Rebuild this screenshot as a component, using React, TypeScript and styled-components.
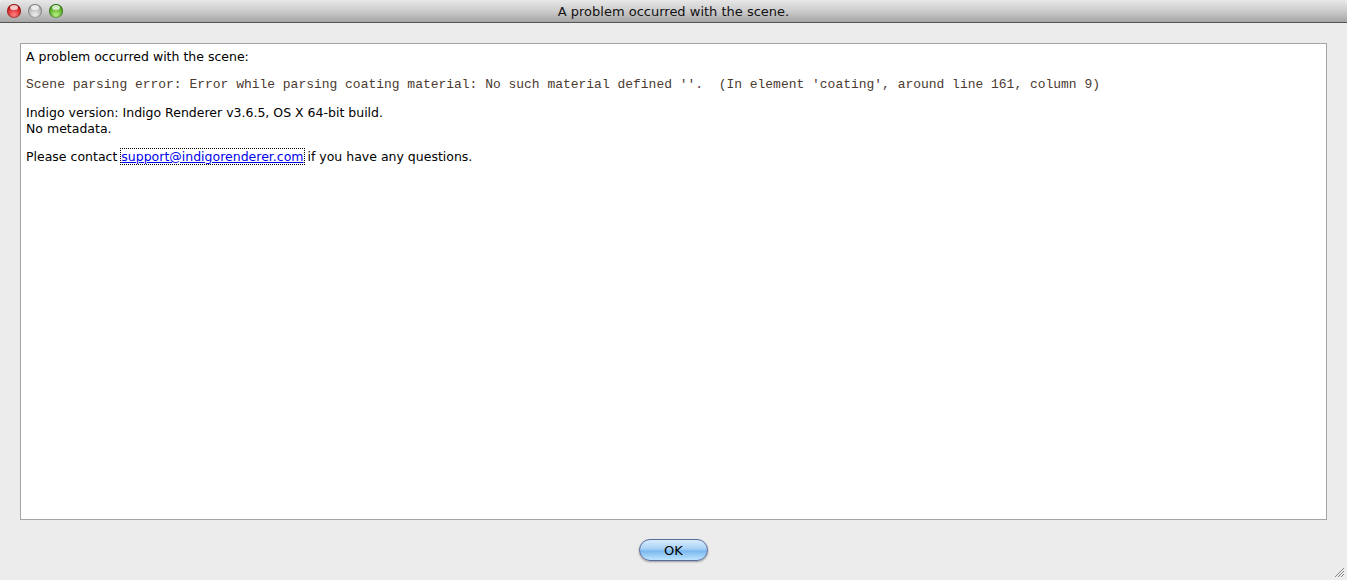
import React from "react";
import styled, { createGlobalStyle } from "styled-components";

const Global = createGlobalStyle`
  html, body { margin: 0; padding: 0; background: #ececec; }
  body { font-family: "DejaVu Sans", "Lucida Grande", sans-serif; }
`;

const Window = styled.div`
  width: 1347px;
  height: 580px;
  display: flex;
  flex-direction: column;
  background: #ececec;
  overflow: hidden;
  position: relative;
`;

const TitleBar = styled.div`
  height: 22px;
  flex: none;
  display: flex;
  align-items: center;
  position: relative;
  background: linear-gradient(#e8e8e8 0%, #cfcfcf 45%, #a6a6a6 100%);
  border-bottom: 1px solid #555;
  border-radius: 5px 5px 0 0;
`;

const Lights = styled.div`
  display: flex;
  gap: 7px;
  padding-left: 7px;
  position: absolute;
  left: 0;
  top: 4px;
`;

const Light = styled.div<{ $c: string; $d: string }>`
  width: 14px;
  height: 14px;
  border-radius: 50%;
  background: radial-gradient(circle at 50% 78%, ${(p) => p.$c} 0%, ${(p) => p.$d} 72%);
  box-shadow: inset 0 0 0 1px rgba(0,0,0,0.28);
  position: relative;
  &::after {
    content: "";
    position: absolute;
    left: 3px;
    top: 1px;
    width: 8px;
    height: 5px;
    border-radius: 50%;
    background: rgba(255,255,255,0.75);
  }
`;

const Title = styled.div`
  flex: 1;
  text-align: center;
  font-size: 13px;
  color: #111;
  padding-top: 1px;
`;

const Body = styled.div`
  flex: 1;
  display: flex;
  flex-direction: column;
  padding: 20px 20px 0 20px;
`;

const MessageBox = styled.div`
  height: 477px;
  background: #fff;
  border: 1px solid #a4a4a4;
  box-sizing: border-box;
  padding: 5px 5px;
  font-size: 12.5px;
  line-height: 16px;
  color: #000;
`;

const Para = styled.p`
  margin: 0 0 12px 0;
`;

const Mono = styled.p`
  margin: 0 0 12px 0;
  font-family: "Liberation Mono", "Courier New", monospace;
  font-size: 12.98px;
  color: #4a3a30;
  white-space: pre;
`;

const Link = styled.a`
  color: #0000ee;
  text-decoration: underline;
  outline: 1px dotted #000;
  outline-offset: 0px;
`;

const Footer = styled.div`
  flex: 1;
  display: flex;
  justify-content: center;
  align-items: flex-start;
  padding-top: 19px;
`;

const OkButton = styled.button`
  width: 69px;
  height: 22px;
  border-radius: 11px;
  border: 1px solid #5a6a9a;
  background: linear-gradient(#d8ecff 0%, #a6d0f6 45%, #7ab8ee 55%, #bfe4ff 100%);
  box-shadow: 0 1px 2px rgba(0,0,0,0.35);
  font-family: "DejaVu Sans", "Lucida Grande", sans-serif;
  font-size: 13px;
  color: #000;
  padding: 0;
`;

const Grip = styled.svg`
  position: absolute;
  right: 2px;
  bottom: 2px;
`;

export default function App() {
  return (
    <Window>
      <Global />
      <TitleBar>
        <Lights>
          <Light $c="#ff8080" $d="#c81010" />
          <Light $c="#eeeeee" $d="#a8a8a8" />
          <Light $c="#b8f080" $d="#3c9a10" />
        </Lights>
        <Title>A problem occurred with the scene.</Title>
      </TitleBar>
      <Body>
        <MessageBox>
          <Para>A problem occurred with the scene:</Para>
          <Mono>Scene parsing error: Error while parsing coating material: No such material defined ''.  (In element 'coating', around line 161, column 9)</Mono>
          <Para>
            Indigo version: Indigo Renderer v3.6.5, OS X 64-bit build.
            <br />
            No metadata.
          </Para>
          <Para>
            Please contact <Link href="#">support@indigorenderer.com</Link> if you have any questions.
          </Para>
        </MessageBox>
        <Footer>
          <OkButton>OK</OkButton>
        </Footer>
      </Body>
      <Grip width="11" height="11" viewBox="0 0 11 11">
        <path d="M10 1 L1 10 M10 4 L4 10 M10 7 L7 10" stroke="#888" strokeWidth="1" />
      </Grip>
    </Window>
  );
}
